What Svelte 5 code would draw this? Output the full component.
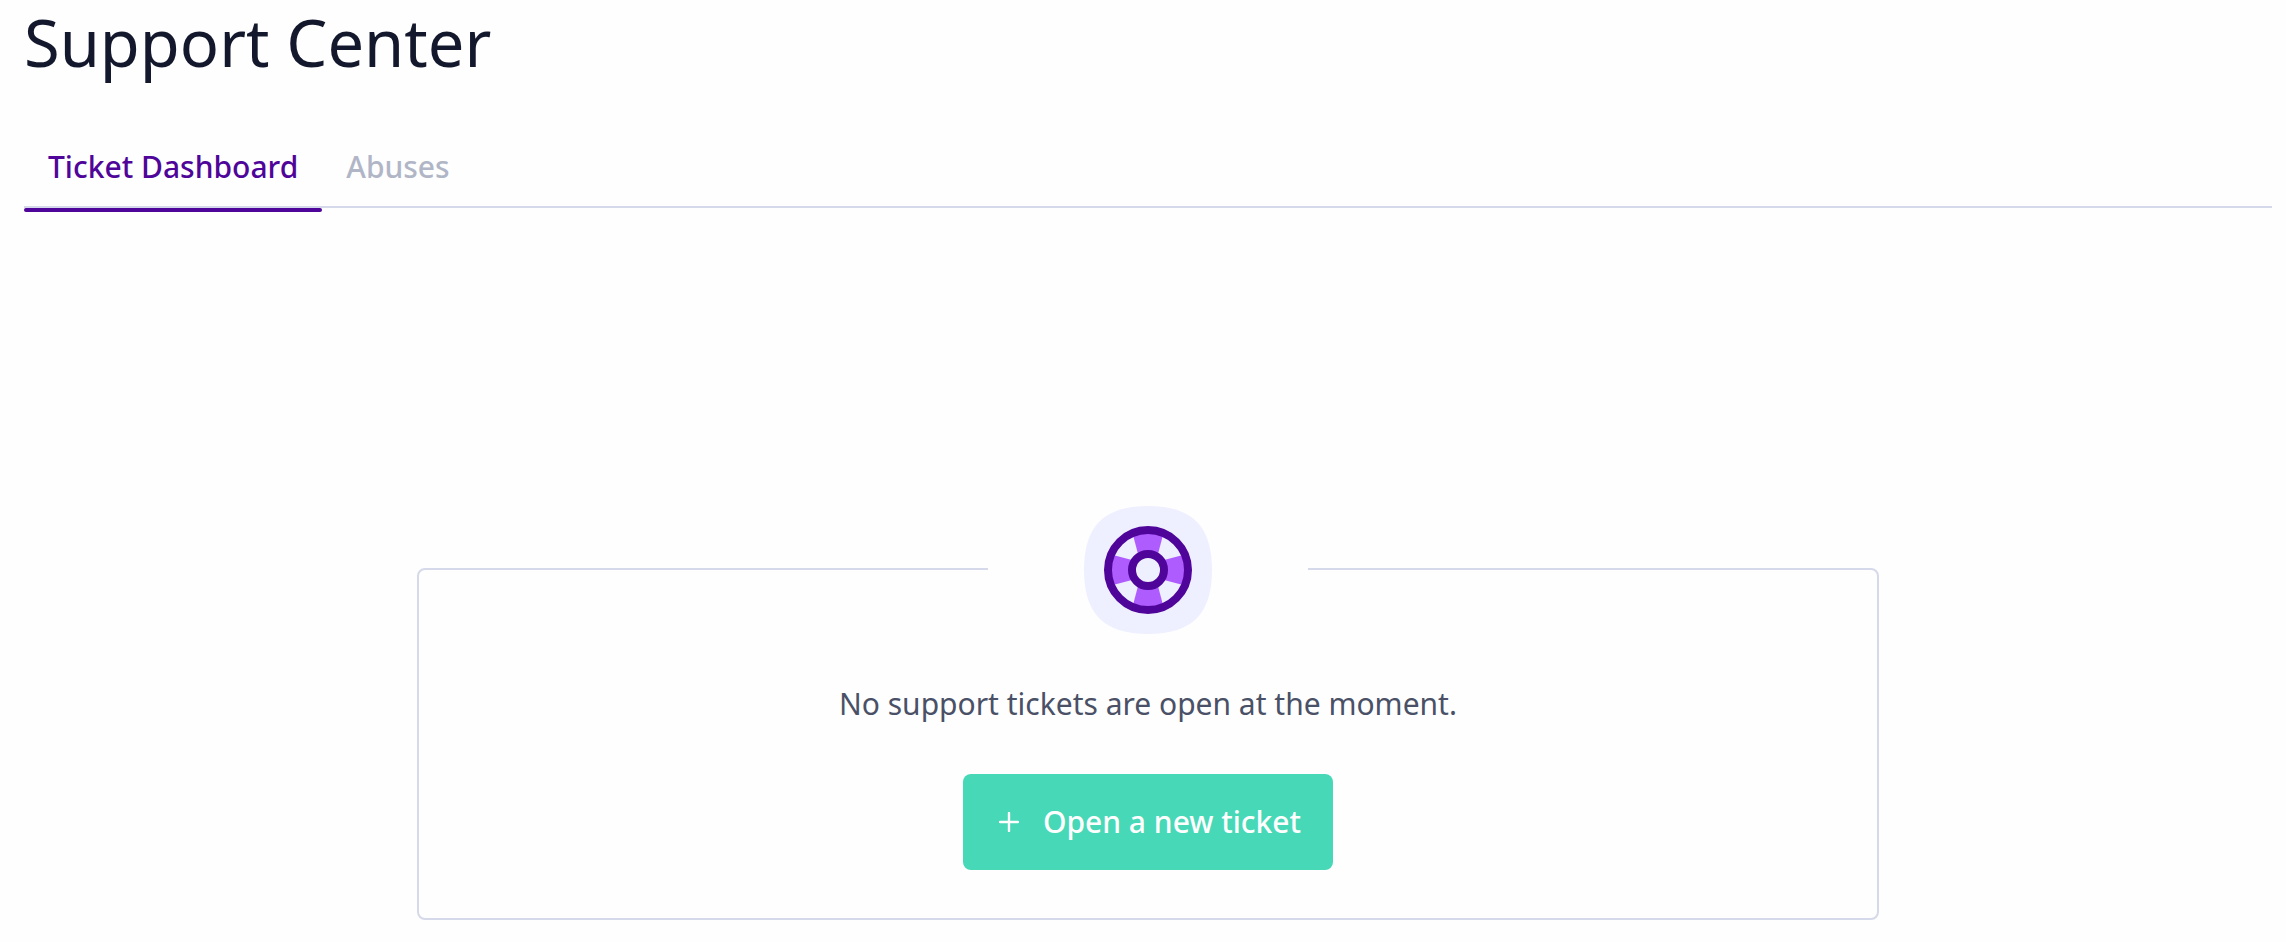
<script>
  const tabs = ['Ticket Dashboard', 'Abuses'];
  let active = $state(0);
</script>

<main class="page">
  <h1>Support Center</h1>

  <div class="tabs" role="tablist">
    {#each tabs as tab, i}
      <button
        type="button"
        role="tab"
        class="tab"
        class:active={active === i}
        aria-selected={active === i}
        onclick={() => (active = i)}>{tab}</button>
    {/each}
  </div>

  <section class="empty">
    <div class="emblem">
      <svg viewBox="0 0 128 128" aria-hidden="true">
        <path fill="#eef0ff" d="M64 0C108 0 128 20 128 64C128 108 108 128 64 128C20 128 0 108 0 64C0 20 20 0 64 0Z" />
        <g fill="#af5cff">
          <path d="M49 29Q64 23 79 29L74 48H54Z" />
          <path d="M49 99Q64 105 79 99L74 80H54Z" />
          <path d="M29 49Q23 64 29 79L48 74V54Z" />
          <path d="M99 49Q105 64 99 79L80 74V54Z" />
        </g>
        <circle cx="64" cy="64" r="40" fill="none" stroke="#4f0599" stroke-width="8" />
        <circle cx="64" cy="64" r="16" fill="#eef0ff" stroke="#4f0599" stroke-width="8" />
      </svg>
    </div>
    <p>No support tickets are open at the moment.</p>
    <button type="button" class="open">
      <svg viewBox="0 0 20 20" aria-hidden="true">
        <path d="M10 1V19M1 10H19" fill="none" stroke="#fff" stroke-width="2.4" stroke-linecap="round" />
      </svg>
      Open a new ticket
    </button>
  </section>
</main>

<style>
  :global(body) {
    margin: 0;
    background: #fefeff;
  }

  .page {
    padding: 0 14px 22px 24px;
    font-family: 'Noto Sans', sans-serif;
    font-size: 30px;
    line-height: 40px;
    color: #4a5166;
  }

  h1 {
    margin: 0;
    font-size: 65px;
    line-height: 84px;
    font-weight: 400;
    color: #14182d;
  }

  .tabs {
    display: flex;
    margin-top: 52px;
    border-bottom: 2px solid #d5d9e9;
  }

  .tab {
    position: relative;
    padding: 11px 24px 19px;
    border: 0;
    background: none;
    font: inherit;
    font-weight: 500;
    color: #b1b6c7;
    cursor: pointer;
  }

  .tab.active {
    color: #4f0599;
  }

  .tab.active::after {
    content: '';
    position: absolute;
    right: 0;
    bottom: -6px;
    left: 0;
    height: 4px;
    border-radius: 2px;
    background: #4f0599;
  }

  .empty {
    display: flex;
    flex-direction: column;
    align-items: center;
    box-sizing: border-box;
    width: 65%;
    margin: 360px auto 0;
    padding-bottom: 48px;
    border: 2px solid #d5d9e9;
    border-radius: 8px;
  }

  .emblem {
    display: flex;
    justify-content: center;
    width: 320px;
    margin-top: -64px;
    background: #fefeff;
  }

  .emblem svg {
    width: 128px;
    height: 128px;
  }

  p {
    margin: 50px 0;
  }

  .open {
    display: flex;
    align-items: center;
    gap: 24px;
    padding: 28px 32px 28px 36px;
    border: 0;
    border-radius: 8px;
    background: #46d8b7;
    font: inherit;
    font-weight: 500;
    color: #fff;
    cursor: pointer;
  }

  .open svg {
    width: 20px;
    height: 20px;
  }
</style>
